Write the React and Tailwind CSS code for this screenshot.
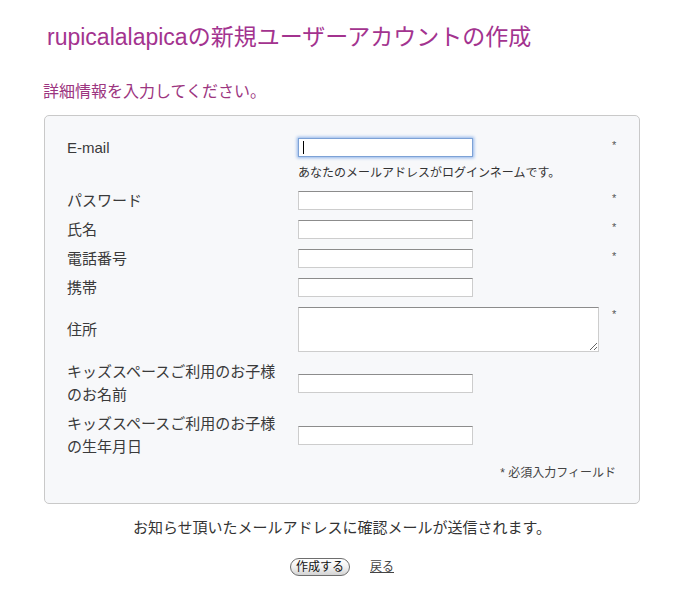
const font = { fontFamily: '"Liberation Sans", "Noto Sans CJK JP", sans-serif' };

const Field = () => (
  <input
    type="text"
    className="w-[175px] h-[19px] bg-white border border-[#cdcdcd] border-t-[#8c8c8c] outline-none"
  />
);

const Star = ({ show }) => (
  <span className="w-[10px] self-start text-[11px] leading-[10px] text-[#555] pt-[2px]">
    {show ? '*' : ''}
  </span>
);

const Row = ({ label, children, required, className = '', leading = 'leading-[19px]' }) => (
  <div className={`flex items-center ${className}`}>
    <div className={`w-[231px] shrink-0 text-[15px] ${leading} text-[#3a3a3a]`}>{label}</div>
    <div className="w-[314px] shrink-0 flex items-center">{children}</div>
    <Star show={required} />
  </div>
);

export default function App() {
  return (
    <div className="min-h-screen bg-white pl-[44px] pt-[22px] pb-6 w-[699px]" style={font}>
      <h1 className="text-[23px] leading-[30px] text-[#a3338f] pl-[3px]">
        rupicalalapicaの新規ユーザーアカウントの作成
      </h1>
      <p className="mt-[30px] -ml-[1px] text-[16px] leading-[20px] text-[#9c3580]">
        詳細情報を入力してください。
      </p>

      <div className="mt-[13px] w-[596px] rounded-[5px] border border-[#c9c9c9] bg-[#f7f8fa] pl-[22px] pt-[22px] pb-[22px]">
        {/* E-mail */}
        <Row label="E-mail" required>
          <div className="relative flex">
            <input
              type="text"
              className="w-[175px] h-[19px] bg-white border border-[#7da2d6] shadow-[0_0_3px_1px_#8fb4ea] outline-none"
            />
            <span className="absolute left-[5px] top-[3px] w-[1px] h-[13px] bg-black" />
          </div>
        </Row>
        <div className="mt-[8px] pl-[231px] text-[12px] leading-[16px] text-[#333]">
          あなたのメールアドレスがログインネームです。
        </div>

        <Row label="パスワード" required className="mt-[10px]">
          <input type="password" className="w-[175px] h-[19px] bg-white border border-[#cdcdcd] border-t-[#8c8c8c] outline-none" />
        </Row>
        <Row label="氏名" required className="mt-[10px]">
          <Field />
        </Row>
        <Row label="電話番号" required className="mt-[10px]">
          <Field />
        </Row>
        <Row label="携帯" className="mt-[10px]">
          <Field />
        </Row>
        <Row label="住所" required className="mt-[10px]">
          <textarea className="w-[301px] h-[45px] bg-white border border-[#cdcdcd] border-t-[#8c8c8c] outline-none" />
        </Row>
        <Row
          label={<>キッズスペースご利用のお子様<br />のお名前</>}
          leading="leading-[23px]"
          className="mt-[8px]"
        >
          <Field />
        </Row>
        <Row
          label={<>キッズスペースご利用のお子様<br />の生年月日</>}
          leading="leading-[23px]"
          className="mt-[6px]"
        >
          <Field />
        </Row>

        <div className="mt-[7px] pr-[23px] text-right text-[12px] leading-[16px] text-[#444]">
          * 必須入力フィールド
        </div>
      </div>

      <p className="mt-[14px] w-[596px] text-center text-[15px] leading-[20px] text-[#333]">
        お知らせ頂いたメールアドレスに確認メールが送信されます。
      </p>

      <div className="mt-[20px] w-[596px] flex items-center justify-center gap-[20px]">
        <button className="h-[18px] w-[60px] rounded-full border border-[#6e6e6e] bg-gradient-to-b from-white via-[#f1f1f1] to-[#d4d4d4] text-[12px] leading-[16px] text-[#111]">
          作成する
        </button>
        <a href="#" className="text-[12px] leading-[16px] text-[#444] underline">
          戻る
        </a>
      </div>
    </div>
  );
}
